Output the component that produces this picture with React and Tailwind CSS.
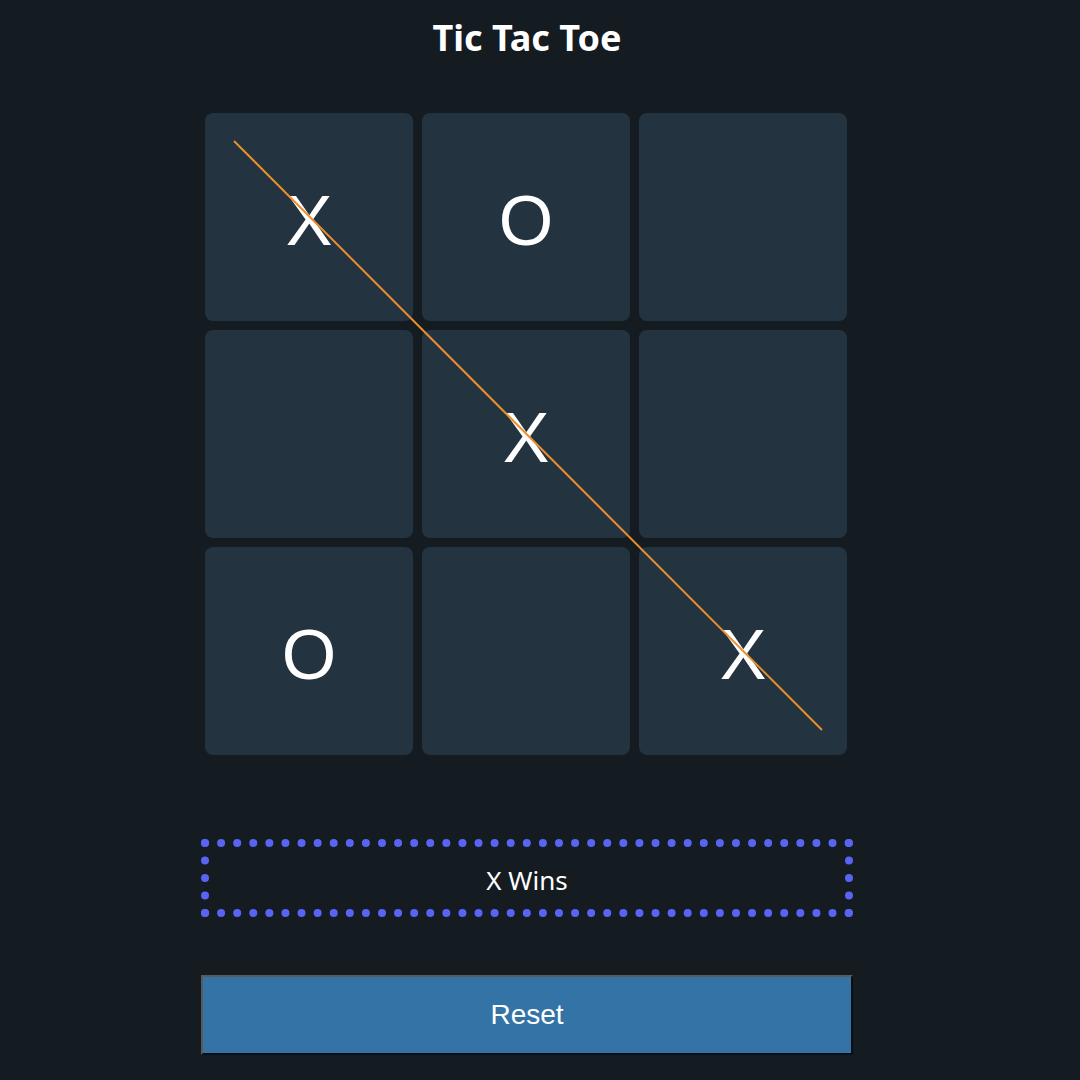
const board = ['X', 'O', '', '', 'X', '', 'O', '', 'X']

export default function App() {
  return (
    <div className="min-h-[1080px] w-full bg-[#141b21] overflow-hidden">
      <div className="ml-[201px] w-[652px]">
        <div className="h-[76px] flex items-center justify-center">
          <h1 className="text-[36px] font-bold text-white font-['Noto_Sans',sans-serif] leading-none">Tic Tac Toe</h1>
        </div>

        <div className="relative mt-[37px] ml-[4px] w-[642px] grid grid-cols-3 gap-[9px]">
          {board.map((v, i) => (
            <div key={i} className="h-[208px] rounded-[8px] bg-[#233340] flex items-center justify-center">
              <span className="text-white text-[70px] leading-none pt-[8px] font-['Liberation_Sans',Arial,sans-serif]">{v}</span>
            </div>
          ))}
          <svg className="absolute left-0 top-0 pointer-events-none" width="642" height="642" viewBox="0 0 642 642">
            <line x1="29" y1="28" x2="617" y2="617" stroke="#e98f2c" strokeWidth="2" />
          </svg>
        </div>

        <div className="mt-[84px] h-[78px] border-[8px] border-dotted border-[#5a64f2] flex items-center justify-center">
          <span className="text-white text-[26px] leading-none pt-[4px] font-['Noto_Sans',sans-serif]">X Wins</span>
        </div>

        <button className="mt-[58px] w-full h-[80px] bg-[#3373a6] border-2 border-t-[#5a5a5a] border-l-[#5a5a5a] border-r-[#0b0f13] border-b-[#0b0f13] text-white text-[28px] font-['Liberation_Sans',Arial,sans-serif]">
          Reset
        </button>
      </div>
    </div>
  )
}
